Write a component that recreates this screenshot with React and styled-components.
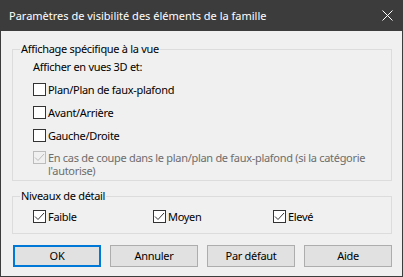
import React from "react";
import styled, { createGlobalStyle } from "styled-components";

const Global = createGlobalStyle`
  html, body { margin: 0; padding: 0; background: #f0f0f0; }
  body { font-family: "Noto Sans", "Open Sans", sans-serif; font-size: 11px; color: #000; }
  * { box-sizing: border-box; }
`;

const Window = styled.div`
  width: 403px;
  height: 277px;
  display: flex;
  flex-direction: column;
  background: #f0f0f0;
  border: 1px solid #3c3c3c;
  border-top: none;
`;

const TitleBar = styled.div`
  height: 31px;
  margin: 0 -1px;
  background: #3c3c3c;
  color: #ffffff;
  display: flex;
  align-items: center;
  justify-content: space-between;
  padding: 0 10px 0 9px;
  font-size: 11px;
`;

const Body = styled.div`
  flex: 1;
  display: flex;
  flex-direction: column;
  padding: 10px 10px 0 11px;
  letter-spacing: -0.3px;
`;

const Group = styled.fieldset`
  margin: 0;
  border: 1px solid #dcdcdc;
  padding: ${(p) => p.$pad};
  min-width: 0;
  display: flex;
  flex-direction: ${(p) => (p.$row ? "row" : "column")};
  margin-bottom: ${(p) => p.$mb || 0}px;
`;

const Legend = styled.legend`
  padding: 0 1px;
  margin-left: -13px;
  line-height: 16px;
`;

const Label = styled.div`
  line-height: 16px;
  margin-bottom: ${(p) => p.$mb || 0}px;
`;

const CheckRow = styled.label`
  display: flex;
  align-items: flex-start;
  gap: 2px;
  line-height: 13px;
  color: ${(p) => (p.$disabled ? "#6d6d6d" : "#000")};
  width: ${(p) => (p.$w ? p.$w + "px" : "auto")};
  margin-bottom: ${(p) => p.$mb || 0}px;
`;

const Box = styled.span`
  flex: none;
  width: 13px;
  height: 13px;
  border: 1px solid ${(p) => (p.$disabled ? "#bcbcbc" : "#333333")};
  background: ${(p) => (p.$disabled ? "#f0f0f0" : "#ffffff")};
  display: flex;
  align-items: center;
  justify-content: center;
  margin-top: 1px;
`;

const LabelText = styled.span`
  line-height: 13px;
  padding-top: 1px;
`;

const ButtonRow = styled.div`
  display: flex;
  gap: 9px;
  padding-left: 1px;
`;

const Button = styled.div`
  width: 88px;
  height: 22px;
  background: #e1e1e1;
  border: ${(p) => (p.$default ? "2px solid #0078d7" : "1px solid #adadad")};
  display: flex;
  align-items: center;
  justify-content: center;
  line-height: 16px;
`;

const Check = ({ checked, disabled }) => (
  <Box $disabled={disabled}>
    {checked && (
      <svg width="11" height="11" viewBox="0 0 11 11">
        <path
          d="M1 5.5 L4 8.5 L10 2"
          fill="none"
          stroke={disabled ? "#bcbcbc" : "#333"}
          strokeWidth="1"
        />
      </svg>
    )}
  </Box>
);

const CheckItem = ({ label, checked, disabled, w, mb }) => (
  <CheckRow $disabled={disabled} $w={w} $mb={mb}>
    <Check checked={checked} disabled={disabled} />
    <LabelText>{label}</LabelText>
  </CheckRow>
);

export default function App() {
  return (
    <>
      <Global />
      <Window>
        <TitleBar>
          <span>Paramètres de visibilité des éléments de la famille</span>
          <svg width="11" height="11" viewBox="0 0 11 11">
            <path d="M0.5 0.5 L10.5 10.5 M10.5 0.5 L0.5 10.5" stroke="#fff" strokeWidth="1" />
          </svg>
        </TitleBar>
        <Body>
          <Group $pad="2px 8px 3px 20px" $mb={7}>
            <Legend>Affichage spécifique à la vue</Legend>
            <Label $mb={7}>Afficher en vues 3D et:</Label>
            <CheckItem label="Plan/Plan de faux-plafond" mb={9} />
            <CheckItem label="Avant/Arrière" mb={9} />
            <CheckItem label="Gauche/Droite" mb={8} />
            <CheckItem
              checked
              disabled
              label="En cas de coupe dans le plan/plan de faux-plafond (si la catégorie l'autorise)"
            />
          </Group>
          <Group $row $pad="5px 8px 10px 20px" $mb={11}>
            <Legend>Niveaux de détail</Legend>
            <CheckItem checked label="Faible" w={120} />
            <CheckItem checked label="Moyen" w={120} />
            <CheckItem checked label="Elevé" />
          </Group>
          <ButtonRow>
            <Button $default>OK</Button>
            <Button>Annuler</Button>
            <Button>Par défaut</Button>
            <Button>Aide</Button>
          </ButtonRow>
        </Body>
      </Window>
    </>
  );
}
